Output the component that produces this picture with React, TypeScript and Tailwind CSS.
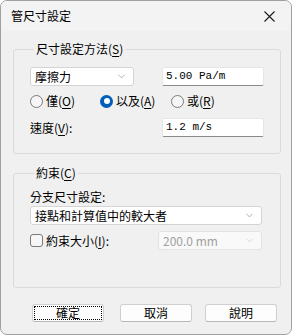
import { ChevronDown } from "lucide-react";

const FONT = "font-['Noto_Sans_CJK_TC','Noto_Sans',sans-serif]";

function U({ c }: { c: string }) {
    return <span className="underline underline-offset-2">{c}</span>;
}

function Combo({ text, w, disabled }: { text: string; w: string; disabled?: boolean }) {
    return (
        <div
            className={`${w} h-[19px] flex items-center justify-between pl-[4px] pr-[6px] rounded-[3px] border ${
                disabled ? "bg-[#f9f9f9] border-[#e3e3e3] text-[#a0a0a0]" : "bg-white border-[#d4d4d4] text-black"
            }`}
        >
            <span className="leading-none">{text}</span>
            <ChevronDown className={`w-[11px] h-[11px] ${disabled ? "text-[#c0c0c0]" : "text-[#707070]"}`} strokeWidth={1.2} />
        </div>
    );
}

function TextBox({ text }: { text: string }) {
    return (
        <div className="w-[102px] h-[19px] flex items-center pl-[3px] bg-white border border-[#e6e6e6] border-b-[#8a8a8a] rounded-[2px] font-['Liberation_Mono',monospace] text-[11px]">
            {text}
        </div>
    );
}

function Radio({ label, checked }: { label: React.ReactNode; checked?: boolean }) {
    return (
        <div className="flex items-center gap-[3px]">
            {checked ? (
                <span className="w-[13px] h-[13px] rounded-full bg-[#005fb8] flex items-center justify-center">
                    <span className="w-[6px] h-[6px] rounded-full bg-white" />
                </span>
            ) : (
                <span className="w-[13px] h-[13px] rounded-full border border-[#7a7a7a] bg-[#f6f6f6]" />
            )}
            <span>{label}</span>
        </div>
    );
}

function Button({ label, focused }: { label: string; focused?: boolean }) {
    return (
        <div className="w-[72px] h-[18px] flex items-center justify-center rounded-[3px] bg-[#fdfdfd] border border-[#d0d0d0] border-b-[#b8b8b8]">
            {focused ? (
                <span className="w-[68px] h-[14px] flex items-center justify-center border border-dotted border-black">{label}</span>
            ) : (
                label
            )}
        </div>
    );
}

export default function App() {
    return (
        <div className={`w-[292px] h-[335px] ${FONT} text-[12px] text-black`}>
            <div className="w-full h-full rounded-[7px] border border-[#a0a0a0] bg-[#f0f0f0] overflow-hidden flex flex-col">
                <div className="h-[30px] shrink-0 bg-[#f3f3f3] flex items-center justify-between pl-[10px] pr-[16px]">
                    <span className="text-[12px]">管尺寸設定</span>
                    <svg width="11" height="11" viewBox="0 0 11 11">
                        <path d="M0.5 0.5 L10.5 10.5 M10.5 0.5 L0.5 10.5" stroke="#1a1a1a" strokeWidth="1.1" />
                    </svg>
                </div>

                <div className="flex flex-col pl-[12px] pr-[10px] pt-[10px]">
                    <fieldset className="border border-[#dadada] rounded-[3px] pl-[16px] pr-[16px] pt-[10px] pb-[16px] m-0">
                        <legend className="ml-[4px] px-[2px] leading-[16px]">
                            尺寸設定方法(<U c="S" />)
                        </legend>
                        <div className="flex items-center justify-between">
                            <Combo text="摩擦力" w="w-[104px]" />
                            <TextBox text="5.00 Pa/m" />
                        </div>
                        <div className="flex items-center mt-[8px] h-[14px]">
                            <div className="w-[70px]">
                                <Radio label={<>僅(<U c="O" />)</>} />
                            </div>
                            <div className="w-[71px]">
                                <Radio checked label={<>以及(<U c="A" />)</>} />
                            </div>
                            <Radio label={<>或(<U c="R" />)</>} />
                        </div>
                        <div className="flex items-center justify-between mt-[10px]">
                            <span>
                                速度(<U c="V" />):
                            </span>
                            <TextBox text="1.2 m/s" />
                        </div>
                    </fieldset>

                    <fieldset className="mt-[11px] border border-[#dadada] rounded-[3px] pl-[16px] pr-[18px] pt-[8px] pb-[37px] m-0">
                        <legend className="ml-[4px] px-[2px] leading-[16px]">
                            約束(<U c="C" />)
                        </legend>
                        <div className="leading-[16px]">分支尺寸設定:</div>
                        <div className="mt-[1px]">
                            <Combo text="接點和計算值中的較大者" w="w-full" />
                        </div>
                        <div className="flex items-center justify-between mt-[6px]">
                            <div className="flex items-center gap-[3px]">
                                <span className="w-[13px] h-[13px] rounded-[3px] border border-[#7a7a7a] bg-[#f6f6f6]" />
                                <span>
                                    約束大小(<U c="I" />):
                                </span>
                            </div>
                            <Combo text="200.0 mm" w="w-[104px]" disabled />
                        </div>
                    </fieldset>

                    <div className="flex items-center mt-[16px] pl-[19px] gap-[16px]">
                        <Button label="確定" focused />
                        <Button label="取消" />
                        <div className="ml-[-3px]">
                            <Button label="說明" />
                        </div>
                    </div>
                </div>
            </div>
        </div>
    );
}
